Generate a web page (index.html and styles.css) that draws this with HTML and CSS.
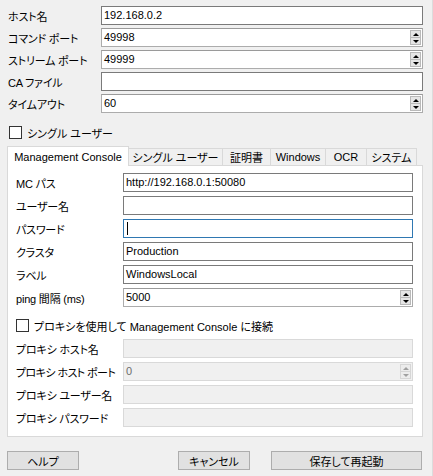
FILE: index.html
```html
<!DOCTYPE html>
<html lang="ja">
<head>
<meta charset="utf-8">
<title>設定</title>
<link rel="stylesheet" href="styles.css">
</head>
<body>
<div class="window">
  <div class="conn">
    <span class="lbl">ホスト名</span>
    <div class="field">192.168.0.2</div>
    <span class="lbl">コマンド ポート</span>
    <div class="field spin"><span class="val">49998</span><span class="arrows"><i class="up"></i><i class="down"></i></span></div>
    <span class="lbl">ストリーム ポート</span>
    <div class="field spin"><span class="val">49999</span><span class="arrows"><i class="up"></i><i class="down"></i></span></div>
    <span class="lbl">CA ファイル</span>
    <div class="field"></div>
    <span class="lbl">タイムアウト</span>
    <div class="field spin"><span class="val">60</span><span class="arrows"><i class="up"></i><i class="down"></i></span></div>
  </div>

  <div class="check single"><span class="box"></span><span>シングル ユーザー</span></div>

  <div class="tabs">
    <div class="tab active t-mc">Management Console</div>
    <div class="tab t-single">シングル ユーザー</div>
    <div class="tab t-cert">証明書</div>
    <div class="tab t-win">Windows</div>
    <div class="tab t-ocr">OCR</div>
    <div class="tab t-sys">システム</div>
  </div>

  <div class="panel">
    <div class="form">
      <span class="lbl">MC パス</span>
      <div class="field">http://192.168.0.1:50080</div>
      <span class="lbl">ユーザー名</span>
      <div class="field"></div>
      <span class="lbl">パスワード</span>
      <div class="field focus"><span class="caret"></span></div>
      <span class="lbl">クラスタ</span>
      <div class="field">Production</div>
      <span class="lbl">ラベル</span>
      <div class="field">WindowsLocal</div>
      <span class="lbl">ping 間隔 (ms)</span>
      <div class="field spin"><span class="val">5000</span><span class="arrows"><i class="up"></i><i class="down"></i></span></div>
    </div>

    <div class="check proxy-check"><span class="box"></span><span>プロキシを使用して Management Console に接続</span></div>

    <div class="form proxy">
      <span class="lbl">プロキシ ホスト名</span>
      <div class="field disabled"></div>
      <span class="lbl tight">プロキシ ホスト ポート</span>
      <div class="field spin disabled"><span class="val">0</span><span class="arrows"><i class="up"></i><i class="down"></i></span></div>
      <span class="lbl">プロキシ ユーザー名</span>
      <div class="field disabled"></div>
      <span class="lbl">プロキシ パスワード</span>
      <div class="field disabled"></div>
    </div>
  </div>

  <div class="buttons">
    <div class="btn help">ヘルプ</div>
    <div class="btn cancel">キャンセル</div>
    <div class="btn save">保存して再起動</div>
  </div>
</div>
</body>
</html>
```

FILE: styles.css
```css
html, body {
  margin: 0;
  padding: 0;
  background: #f0f0f0;
}

.window {
  width: 433px;
  height: 476px;
  box-sizing: border-box;
  padding-top: 6px;
  font-family: "Liberation Sans", "Noto Sans CJK JP", sans-serif;
  font-feature-settings: "palt";
  font-size: 11px;
  color: #000;
  border-right: 1px solid #dcdcdc;
  overflow: hidden;
}

.conn {
  display: grid;
  grid-template-columns: 93px 1fr;
  row-gap: 3px;
  margin: 0 9px 0 8px;
}

.lbl {
  display: flex;
  align-items: center;
  white-space: nowrap;
  letter-spacing: -0.2px;
}

.lbl.tight {
  letter-spacing: -0.6px;
}

.field {
  height: 19px;
  box-sizing: border-box;
  border: 1px solid #7a7a7a;
  background: #fff;
  padding-left: 2px;
  line-height: 17px;
  display: flex;
  align-items: center;
  white-space: nowrap;
}

.field.spin {
  border-color: #acacac;
  border-top-color: #9a9a9a;
  justify-content: space-between;
}

.field.spin .val {
  flex: 1;
}

.arrows {
  width: 11px;
  align-self: stretch;
  margin: 1px 1px 1px 0;
  display: flex;
  flex-direction: column;
}

.arrows i {
  flex: 1;
  background: #e5e5e5;
  border: 1px solid #b9b9b9;
  display: flex;
  align-items: center;
  justify-content: center;
}

.arrows i + i {
  border-top: none;
}

.arrows i::after {
  content: "";
  width: 0;
  height: 0;
  border-left: 3px solid transparent;
  border-right: 3px solid transparent;
}

.arrows .up::after {
  border-bottom: 3px solid #000;
}

.arrows .down::after {
  border-top: 3px solid #000;
}

.field.focus {
  border-color: #2f78b2;
}

.caret {
  width: 1px;
  height: 13px;
  background: #000;
  margin-left: 1px;
}

.field.disabled {
  background: #f0f0f0;
  border-color: #d9d9d9;
  color: #6d6d6d;
}

.field.disabled .arrows i {
  background: #ececec;
  border-color: #d6d6d6;
}

.field.disabled .arrows .up::after {
  border-bottom-color: #a0a0a0;
}

.field.disabled .arrows .down::after {
  border-top-color: #a0a0a0;
}

.check {
  display: flex;
  align-items: center;
  height: 13px;
  gap: 5px;
  white-space: nowrap;
}

.check .box {
  width: 13px;
  height: 13px;
  box-sizing: border-box;
  border: 1px solid #333;
  background: #fff;
  flex: none;
}

.single {
  margin: 13px 0 0 9px;
}

.tabs {
  display: flex;
  align-items: flex-end;
  margin: 7px 9px 0 7px;
  height: 19px;
}

.tab {
  height: 17px;
  box-sizing: border-box;
  border: 1px solid #d9d9d9;
  border-bottom: none;
  background: #f0f0f0;
  display: flex;
  align-items: center;
  justify-content: center;
  white-space: nowrap;
  margin-left: -1px;
  flex: none;
}

.tab.active {
  height: 20px;
  margin-left: 0;
  margin-bottom: -1px;
  background: #fff;
  position: relative;
  z-index: 1;
}

.t-mc { width: 122px; }
.t-single { width: 95px; }
.t-cert { width: 49px; }
.t-win { width: 56px; }
.t-ocr { width: 42px; }
.t-sys { width: 51px; }

.panel {
  margin: 0 9px 0 7px;
  height: 272px;
  box-sizing: border-box;
  border: 1px solid #d9d9d9;
  background: #fff;
  padding: 7px 9px 0 8px;
}

.form {
  display: grid;
  grid-template-columns: 107px 1fr;
  row-gap: 4px;
}

.proxy-check {
  margin: 12px 0 7px 0;
}

.buttons {
  display: flex;
  margin: 14px 10px 0 7px;
}

.btn {
  height: 19px;
  box-sizing: border-box;
  border: 1px solid #adadad;
  background: #e1e1e1;
  display: flex;
  align-items: center;
  justify-content: center;
  white-space: nowrap;
}

.help {
  width: 72px;
}

.cancel {
  width: 72px;
  margin-left: auto;
}

.save {
  width: 151px;
  margin-left: 21px;
}
```
